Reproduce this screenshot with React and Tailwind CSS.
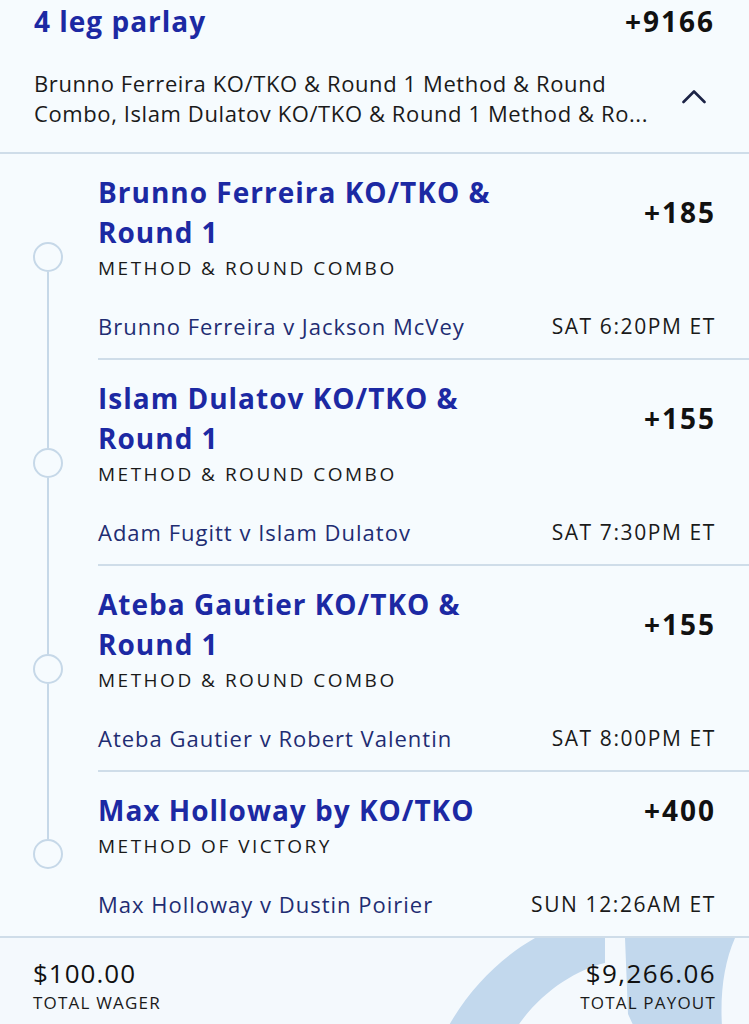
import React from "react";

const legs = [
  { title: "Brunno Ferreira KO/TKO & Round 1", odds: "+185", type: "METHOD & ROUND COMBO", match: "Brunno Ferreira v Jackson McVey", time: "SAT 6:20PM ET" },
  { title: "Islam Dulatov KO/TKO & Round 1", odds: "+155", type: "METHOD & ROUND COMBO", match: "Adam Fugitt v Islam Dulatov", time: "SAT 7:30PM ET" },
  { title: "Ateba Gautier KO/TKO & Round 1", odds: "+155", type: "METHOD & ROUND COMBO", match: "Ateba Gautier v Robert Valentin", time: "SAT 8:00PM ET" },
  { title: "Max Holloway by KO/TKO", odds: "+400", type: "METHOD OF VICTORY", match: "Max Holloway v Dustin Poirier", time: "SUN 12:26AM ET" },
];

function Leg({ leg, first, last }) {
  return (
    <div className="flex">
      <div className="flex w-[98px] shrink-0 flex-col items-center pr-[2px]">
        <div className={"w-[2px] flex-1 " + (first ? "bg-transparent" : "bg-[#c6d8e8]")} />
        <div className="h-[30px] w-[30px] rounded-full border-2 border-[#c6d8e8] bg-[#f6fbfe]" />
        <div className={"w-[2px] flex-1 " + (last ? "bg-transparent" : "bg-[#c6d8e8]")} />
      </div>
      <div className={"flex-1 pr-[33px] pt-[18px] pb-[17px] " + (last ? "" : "border-b-2 border-[#cfdde9]")}>
        <div className="flex items-center justify-between">
          <div className="w-[420px] text-[28px] font-bold leading-[40px] tracking-[1px] text-[#1c29a3]">{leg.title}</div>
          <div className="text-[28px] font-bold leading-[40px] tracking-[2px] text-[#111]">{leg.odds}</div>
        </div>
        <div className="mt-[4px] text-[19px] leading-[24px] tracking-[2.5px] text-[#1a1a1a]">{leg.type}</div>
        <div className="mt-[31px] flex items-center justify-between leading-[30px]">
          <span className="text-[22px] tracking-[1px] text-[#1f2d72]">{leg.match}</span>
          <span className="text-[21px] tracking-[1.6px] text-[#1a1a1a]">{leg.time}</span>
        </div>
      </div>
    </div>
  );
}

export default function App() {
  return (
    <div className="min-h-[1024px] w-[749px] bg-[#f6fbfe]" style={{ fontFamily: "'Open Sans', Lato, sans-serif" }}>
      <div className="px-[34px] pt-[1px] pb-[24px]">
        <div className="flex items-center justify-between">
          <div className="text-[28px] font-bold leading-[40px] tracking-[1px] text-[#1c29a3]">4 leg parlay</div>
          <div className="text-[28px] font-bold leading-[40px] tracking-[2px] text-[#111]">+9166</div>
        </div>
        <div className="mt-[27px] flex items-center">
          <div className="w-[630px] whitespace-nowrap text-[22px] leading-[30px] tracking-[0.6px] text-[#1a1a1a]">
            Brunno Ferreira KO/TKO &amp; Round 1 Method &amp; Round
            <br />
            Combo, Islam Dulatov KO/TKO &amp; Round 1 Method &amp; Ro...
          </div>
          <div className="flex flex-1 justify-end pr-[9px] pb-[4px]">
            <svg width="24" height="15" viewBox="0 0 24 15" fill="none">
              <path d="M1.5 13 L12 2.5 L22.5 13" stroke="#1c2346" strokeWidth="2.6" strokeLinecap="round" strokeLinejoin="round" />
            </svg>
          </div>
        </div>
      </div>
      <div className="border-t-2 border-[#cfdde9]">
        {legs.map((leg, i) => (
          <Leg key={i} leg={leg} first={i === 0} last={i === legs.length - 1} />
        ))}
      </div>
      <div className="relative h-[89px] overflow-hidden border-t-2 border-[#cfdde9] bg-[#f4f9fd]">
        <svg className="absolute left-0 top-0" width="749" height="89" viewBox="0 0 749 89">
          <path d="M448 89 C470 50 500 20 535 0 L605 0 L605 25 C575 32 540 55 517 89 Z" fill="#c2d8ed" />
          <path d="M625 0 L735 0 C724 25 720 55 722 89 L634 89 L628 76 Z" fill="#c2d8ed" />
        </svg>
        <div className="relative flex items-start justify-between px-[33px] pt-[18px]">
          <div>
            <div className="text-[26px] leading-[34px] tracking-[1px] text-[#111]">$100.00</div>
            <div className="mt-[1px] text-[17px] leading-[24px] tracking-[1.2px] text-[#1a1a1a]">TOTAL WAGER</div>
          </div>
          <div className="text-right">
            <div className="text-[26px] leading-[34px] tracking-[1.4px] text-[#111]">$9,266.06</div>
            <div className="mt-[1px] text-[17px] leading-[24px] tracking-[1.2px] text-[#1a1a1a]">TOTAL PAYOUT</div>
          </div>
        </div>
      </div>
    </div>
  );
}
